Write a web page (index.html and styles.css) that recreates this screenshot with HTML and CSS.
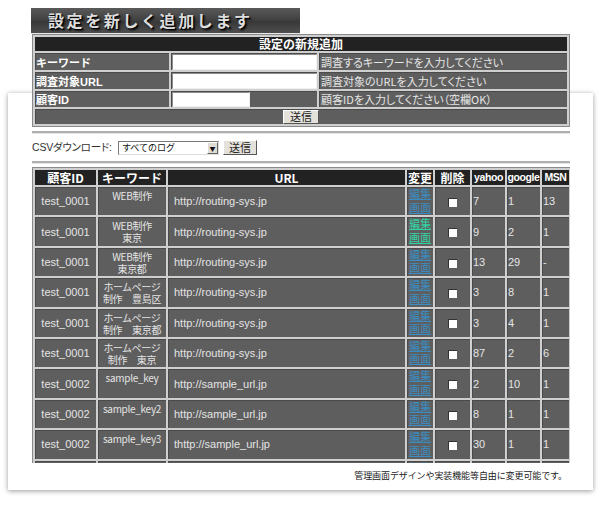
FILE: index.html
```html
<!DOCTYPE html>
<html lang="ja">
<head>
    <meta charset="UTF-8">
    <title>設定を新しく追加します</title>
    <link rel="stylesheet" href="styles.css">
</head>
<body>
    <div class="page">
        <div class="content">
            <h1 class="title">設定を新しく追加します</h1>

            <table class="form">
                <colgroup>
                    <col class="c-label">
                    <col class="c-input">
                    <col>
                </colgroup>
                <tr>
                    <th colspan="3">設定の新規追加</th>
                </tr>
                <tr class="tall">
                    <td class="label">キーワード</td>
                    <td class="field"><input type="text" class="text"></td>
                    <td class="desc">調査するキーワードを入力してください</td>
                </tr>
                <tr class="tall">
                    <td class="label">調査対象URL</td>
                    <td class="field"><input type="text" class="text"></td>
                    <td class="desc">調査対象のURLを入力してください</td>
                </tr>
                <tr>
                    <td class="label">顧客ID</td>
                    <td class="field"><input type="text" class="text short"></td>
                    <td class="desc">顧客IDを入力してください（空欄OK）</td>
                </tr>
                <tr>
                    <td colspan="3" class="submit"><button class="btn">送信</button></td>
                </tr>
            </table>

            <div class="rule"></div>

            <div class="csv">
                <span class="csv-label">CSVダウンロード:</span>
                <span class="select">すべてのログ<span class="arrow">▼</span></span>
                <button class="btn">送信</button>
            </div>

            <div class="rule"></div>

            <div class="list">
                <table class="data">
                    <colgroup>
                        <col style="width:61px">
                        <col style="width:68px">
                        <col style="width:237px">
                        <col style="width:26px">
                        <col style="width:35px">
                        <col style="width:33px">
                        <col style="width:33px">
                        <col style="width:27px">
                    </colgroup>
                    <tr>
                        <th>顧客ID</th>
                        <th>キーワード</th>
                        <th>URL</th>
                        <th>変更</th>
                        <th>削除</th>
                        <th class="small">yahoo</th>
                        <th class="small">google</th>
                        <th class="small">MSN</th>
                    </tr>
                    <tr>
                        <td class="id">test_0001</td>
                        <td class="kw">WEB制作</td>
                        <td class="url">http://routing-sys.jp</td>
                        <td class="edit"><a href="#">編集<br>画面</a></td>
                        <td class="del"><span class="check"></span></td>
                        <td class="num">7</td>
                        <td class="num">1</td>
                        <td class="num">13</td>
                    </tr>
                    <tr>
                        <td class="id">test_0001</td>
                        <td class="kw">WEB制作<br>東京</td>
                        <td class="url">http://routing-sys.jp</td>
                        <td class="edit"><a href="#" class="visited">編集<br>画面</a></td>
                        <td class="del"><span class="check"></span></td>
                        <td class="num">9</td>
                        <td class="num">2</td>
                        <td class="num">1</td>
                    </tr>
                    <tr>
                        <td class="id">test_0001</td>
                        <td class="kw">WEB制作<br>東京都</td>
                        <td class="url">http://routing-sys.jp</td>
                        <td class="edit"><a href="#">編集<br>画面</a></td>
                        <td class="del"><span class="check"></span></td>
                        <td class="num">13</td>
                        <td class="num">29</td>
                        <td class="num">-</td>
                    </tr>
                    <tr>
                        <td class="id">test_0001</td>
                        <td class="kw">ホームページ<br>制作　豊島区</td>
                        <td class="url">http://routing-sys.jp</td>
                        <td class="edit"><a href="#">編集<br>画面</a></td>
                        <td class="del"><span class="check"></span></td>
                        <td class="num">3</td>
                        <td class="num">8</td>
                        <td class="num">1</td>
                    </tr>
                    <tr>
                        <td class="id">test_0001</td>
                        <td class="kw">ホームページ<br>制作　東京都</td>
                        <td class="url">http://routing-sys.jp</td>
                        <td class="edit"><a href="#">編集<br>画面</a></td>
                        <td class="del"><span class="check"></span></td>
                        <td class="num">3</td>
                        <td class="num">4</td>
                        <td class="num">1</td>
                    </tr>
                    <tr>
                        <td class="id">test_0001</td>
                        <td class="kw">ホームページ<br>制作　東京</td>
                        <td class="url">http://routing-sys.jp</td>
                        <td class="edit"><a href="#">編集<br>画面</a></td>
                        <td class="del"><span class="check"></span></td>
                        <td class="num">87</td>
                        <td class="num">2</td>
                        <td class="num">6</td>
                    </tr>
                    <tr>
                        <td class="id">test_0002</td>
                        <td class="kw">sample_key</td>
                        <td class="url">http://sample_url.jp</td>
                        <td class="edit"><a href="#">編集<br>画面</a></td>
                        <td class="del"><span class="check"></span></td>
                        <td class="num">2</td>
                        <td class="num">10</td>
                        <td class="num">1</td>
                    </tr>
                    <tr>
                        <td class="id">test_0002</td>
                        <td class="kw">sample_key2</td>
                        <td class="url">http://sample_url.jp</td>
                        <td class="edit"><a href="#">編集<br>画面</a></td>
                        <td class="del"><span class="check"></span></td>
                        <td class="num">8</td>
                        <td class="num">1</td>
                        <td class="num">1</td>
                    </tr>
                    <tr>
                        <td class="id">test_0002</td>
                        <td class="kw">sample_key3</td>
                        <td class="url">thttp://sample_url.jp</td>
                        <td class="edit"><a href="#">編集<br>画面</a></td>
                        <td class="del"><span class="check"></span></td>
                        <td class="num">30</td>
                        <td class="num">1</td>
                        <td class="num">1</td>
                    </tr>
                    <tr class="cut">
                        <td class="id"></td>
                        <td class="kw"></td>
                        <td class="url"></td>
                        <td class="edit"><a href="#">編集</a></td>
                        <td class="del"></td>
                        <td class="num"></td>
                        <td class="num"></td>
                        <td class="num"></td>
                    </tr>
                </table>
            </div>

            <p class="note">管理画面デザインや実装機能等自由に変更可能です。</p>
        </div>
    </div>
</body>
</html>
```

FILE: styles.css
```css
/* page base */
body {
    margin: 0;
    background: #fff;
    font-family: "Liberation Sans", "Noto Sans CJK JP", sans-serif;
    color: #333;
}

.page {
    position: relative;
    z-index: 0;
    width: 601px;
    height: 507px;
    overflow: hidden;
}

/* white sheet with a soft shadow, sits under the content */
.page::before {
    content: "";
    position: absolute;
    z-index: -1;
    top: 93px;
    left: 8px;
    width: 585px;
    height: 397px;
    background: #fff;
    box-shadow: 0 1px 5px rgba(0, 0, 0, 0.4);
}

.content {
    width: 538px;
    padding: 8px 0 0 32px;
}

/* title bar */
.title {
    margin: 0 0 0 -1px;
    width: 252px;
    height: 25px;
    padding-left: 17px;
    font-family: "Noto Sans CJK JP", sans-serif;
    font-size: 16px;
    font-weight: bold;
    line-height: 25px;
    letter-spacing: 2.6px;
    color: #ddd;
    text-shadow: 1px 1px 0 #000, 2px 2px 2px #111;
    background: linear-gradient(#5a5a5a, #424242 45%, #383838 55%, #4e4e4e);
    border-bottom: 1px solid #e8e8e8;
}

/* shared table look */
.form,
.data {
    width: 538px;
    table-layout: fixed;
    border-collapse: separate;
    border-spacing: 2px;
    background: #cfcfcf;
    border: 1px solid #8a8a8a;
    box-sizing: border-box;
}

.form th,
.data th {
    background: #222;
    color: #fff;
    font-family: "Noto Sans CJK JP", sans-serif;
    font-weight: bold;
    font-size: 12px;
    line-height: 14px;
    height: 14px;
    padding: 0;
    white-space: nowrap;
}

.data th {
    height: 15px;
    line-height: 15px;
    overflow: hidden;
}

.form td,
.data td {
    background: #5e5e5e;
    padding: 0;
    box-shadow: inset 1px 1px 0 #4a4a4a;
}

/* add-new form */
.c-label { width: 134px; }
.c-input { width: 146px; }

.form td { height: 15px; }
.form tr.tall td { height: 17px; }

.form .label {
    color: #fff;
    font-size: 11px;
    font-weight: bold;
    padding-left: 1px;
}

.form .desc {
    color: #e6e6e6;
    font-family: "Noto Sans CJK JP", sans-serif;
    font-size: 11px;
    font-feature-settings: "palt";
    padding-left: 2px;
    white-space: nowrap;
}

.form .field {
    padding-left: 1px;
}

.text {
    display: block;
    box-sizing: border-box;
    width: 100%;
    height: 15px;
    margin: 0;
    padding: 0;
    background: #fff;
    border: 1px solid;
    border-color: #8c8c8c #f0f0f0 #f0f0f0 #8c8c8c;
}

.tall .text { height: 16px; }

.text.short { width: 78px; }

.form .submit {
    text-align: center;
    line-height: 0;
}

.btn {
    height: 14px;
    padding: 0 6px;
    margin: 0;
    font-family: "Noto Sans CJK JP", sans-serif;
    font-size: 11px;
    line-height: 11px;
    color: #222;
    background: #e4e1da;
    border: 1px solid;
    border-color: #fff #555 #555 #fff;
    vertical-align: middle;
}

/* divider lines */
.rule {
    height: 0;
    margin-top: 4px;
    border-top: 2px solid #b0b0b0;
    border-bottom: 1px solid #e4e4e4;
}

/* csv download */
.csv {
    display: flex;
    align-items: center;
    gap: 3px;
    height: 15px;
    padding: 6px 0 5px;
    line-height: 15px;
    font-size: 11px;
    color: #333;
}

.csv + .rule {
    margin-top: 1px;
}

.csv-label {
    width: 83px;
    white-space: nowrap;
    font-feature-settings: "palt";
    font-size: 10.5px;
    letter-spacing: -0.2px;
}

.select {
    position: relative;
    box-sizing: border-box;
    width: 101px;
    height: 14px;
    padding-left: 3px;
    font-family: "Noto Sans CJK JP", sans-serif;
    font-size: 9px;
    line-height: 12px;
    color: #111;
    background: #fff;
    border: 1px solid;
    border-color: #777 #ddd #ddd #777;
}

.select .arrow {
    position: absolute;
    top: 0;
    right: 0;
    width: 11px;
    height: 12px;
    font-size: 6px;
    line-height: 12px;
    text-align: center;
    background: #e0ddd6;
    box-sizing: border-box;
    border: 1px solid;
    border-color: #fff #666 #666 #fff;
}

.csv .btn {
    width: 34px;
    height: 15px;
    margin-left: 1px;
    padding: 0;
}

/* log table, cut at the sheet edge */
.list {
    margin-top: 3px;
    height: 296px;
    overflow: hidden;
}

.data td {
    height: 28.4px;
    color: #e4e4e4;
    font-size: 11px;
    white-space: nowrap;
    overflow: hidden;
}

.data th.small {
    font-family: "Liberation Sans", sans-serif;
    font-size: 10.5px;
    letter-spacing: -0.4px;
}

.data .id {
    text-align: center;
}

.data .kw {
    vertical-align: top;
    text-align: center;
    padding-top: 3px;
    height: 25.4px;
    font-family: "Noto Sans CJK JP", sans-serif;
    font-size: 10px;
    line-height: 12px;
    font-feature-settings: "palt";
    letter-spacing: -0.3px;
}

.data .url {
    padding-left: 6px;
}

.data .num {
    padding-left: 1px;
}

.data .edit {
    vertical-align: top;
    padding-left: 2px;
}

.edit a {
    display: block;
    font-family: "Noto Sans CJK JP", sans-serif;
    font-size: 11px;
    line-height: 13.5px;
    color: #3a8dc2;
    text-decoration: underline;
}

.edit a.visited {
    color: #33d4a4;
}

.data .del {
    text-align: center;
}

.check {
    display: inline-block;
    width: 8px;
    height: 8px;
    background: #fff;
    border-top: 1px solid #333;
    border-left: 1px solid #333;
    vertical-align: middle;
}

/* footnote */
.note {
    margin: 7px 3px 0 0;
    text-align: right;
    font-family: "Noto Sans CJK JP", sans-serif;
    font-size: 9px;
    line-height: 12px;
    letter-spacing: -0.1px;
    color: #222;
}
```
